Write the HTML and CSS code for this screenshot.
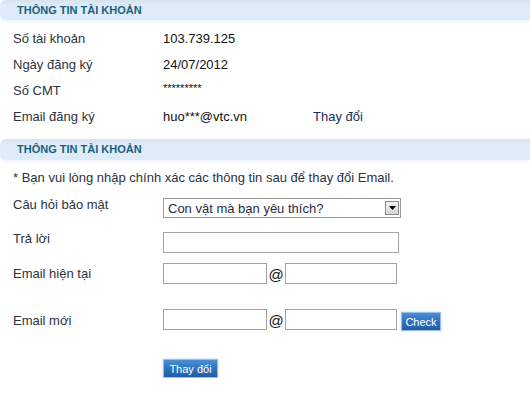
FILE: index.html
```html
<!DOCTYPE html>
<html lang="vi">
<head>
<meta charset="utf-8">
<title>Thông tin tài khoản</title>
<link rel="stylesheet" href="styles.css">
</head>
<body>
<div class="page">
  <div class="section-head">THÔNG TIN TÀI KHOẢN</div>
  <div class="info">
    <div class="info-row"><span class="label">Số tài khoản</span><span class="value">103.739.125</span></div>
    <div class="info-row"><span class="label">Ngày đăng ký</span><span class="value">24/07/2012</span></div>
    <div class="info-row"><span class="label">Số CMT</span><span class="value stars">*********</span></div>
    <div class="info-row"><span class="label">Email đăng ký</span><span class="value email">huo***@vtc.vn</span><a class="change-link" href="#">Thay đổi</a></div>
  </div>

  <div class="section-head second">THÔNG TIN TÀI KHOẢN</div>
  <p class="note">* Bạn vui lòng nhập chính xác các thông tin sau để thay đổi Email.</p>

  <div class="form-row row-question">
    <span class="label">Câu hỏi bảo mật</span>
    <div class="select">
      <span class="select-text">Con vật mà bạn yêu thích?</span>
      <span class="select-arrow"><svg width="7" height="4" viewBox="0 0 7 4"><path d="M0 0H7L3.5 4Z" fill="#000"/></svg></span>
    </div>
  </div>

  <div class="form-row row-answer">
    <span class="label">Trả lời</span>
    <input class="input wide" type="text">
  </div>

  <div class="form-row row-current">
    <span class="label">Email hiện tại</span>
    <input class="input user" type="text"><span class="at">@</span><input class="input domain" type="text">
  </div>

  <div class="form-row row-new">
    <span class="label">Email mới</span>
    <input class="input user" type="text"><span class="at">@</span><input class="input domain" type="text">
    <button class="btn check" type="button">Check</button>
  </div>

  <div class="submit-row">
    <button class="btn submit" type="button">Thay đổi</button>
  </div>
</div>
</body>
</html>
```

FILE: styles.css
```css
html, body {
  margin: 0;
  padding: 0;
  background: #ffffff;
}

body {
  font-family: "Liberation Sans", Arial, sans-serif;
  font-size: 13px;
  color: #2b3340;
}

.page {
  width: 530px;
}

.section-head {
  height: 20px;
  line-height: 20px;
  padding-left: 17px;
  background: linear-gradient(#d6e3ef 0, #deebf8 25%, #deecf9 100%);
  border-radius: 6px 0 0 6px;
  color: #1b6080;
  font-weight: bold;
  font-size: 11px;
  box-shadow: 0 2px 3px rgba(222, 235, 248, 0.5);
}

.section-head.second {
  height: 21px;
  line-height: 21px;
  margin-top: 10px;
}

.info {
  padding-top: 5px;
}

.info-row {
  display: flex;
  align-items: center;
  height: 26px;
  padding-left: 13px;
}

.label {
  width: 150px;
  flex: none;
  color: #2b3340;
}

.value {
  color: #111111;
}

.value.stars {
  font-size: 11px;
  position: relative;
  top: -2px;
}

.value.email {
  width: 150px;
}

.change-link {
  color: #1e2f55;
  text-decoration: none;
}

.note {
  margin: 8px 0 0;
  padding-left: 13px;
  line-height: 20px;
  color: #2b3340;
}

.form-row {
  display: flex;
  align-items: flex-start;
  padding-left: 13px;
}

.form-row .label {
  line-height: 16px;
}

.row-question {
  margin-top: 8px;
}

.row-question .label {
  margin-top: 1px;
}

.select {
  margin-top: 2px;
  width: 238px;
  height: 20px;
  box-sizing: border-box;
  border: 1px solid #9c9c9c;
  display: flex;
  align-items: center;
  justify-content: space-between;
  padding-left: 4px;
  padding-right: 1px;
  color: #1f2b46;
  background: #fff;
}

.select-arrow {
  width: 14px;
  height: 14px;
  box-sizing: border-box;
  border: 1px solid #8a8a8a;
  background: linear-gradient(#f2f2f2, #d6d6d6);
  display: flex;
  align-items: center;
  justify-content: center;
}

.input {
  box-sizing: border-box;
  height: 21px;
  border: 1px solid #a3a3a3;
  margin: 0;
  padding: 0 3px;
  background: #fff;
  font-family: inherit;
  font-size: 13px;
}

.input.wide {
  width: 236px;
}

.input.user {
  width: 104px;
}

.input.domain {
  width: 112px;
}

.at {
  width: 18px;
  flex: none;
  text-align: center;
  font-size: 15px;
  line-height: 16px;
  color: #111;
  margin-top: 4px;
}

.row-answer {
  margin-top: 13px;
}

.row-answer .input {
  margin-top: 1px;
}

.row-current {
  margin-top: 10px;
}

.row-current .label {
  margin-top: 3px;
}

.row-new {
  margin-top: 25px;
}

.row-new .label {
  margin-top: 4px;
}

.btn {
  height: 19px;
  box-sizing: border-box;
  border: 1px solid #9fbfe0;
  background: linear-gradient(#4a8fd4 0, #2f72bd 50%, #1f5ea6 100%);
  color: #ffffff;
  font-family: inherit;
  font-size: 11px;
  padding: 0;
  margin: 0;
  cursor: pointer;
  box-shadow: 0 0 2px rgba(120, 160, 210, 0.5);
}

.btn.check {
  width: 40px;
  margin-left: 4px;
  margin-top: 3px;
}

.submit-row {
  padding-left: 163px;
  margin-top: 28px;
}

.btn.submit {
  width: 55px;
  display: block;
}
```
